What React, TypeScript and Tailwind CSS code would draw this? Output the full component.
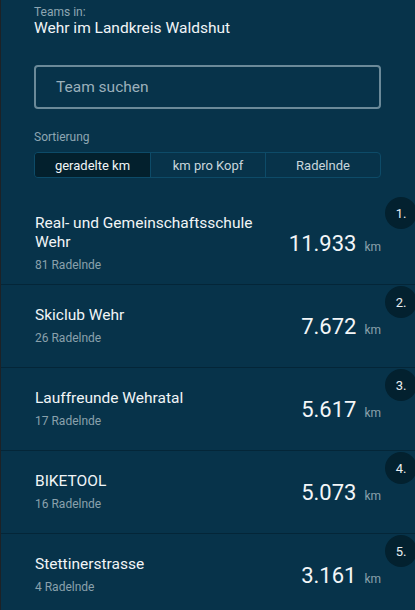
import React from "react";

type Team = { rank: number; name: string; members: string; km: string };

const teams: Team[] = [
  { rank: 1, name: "Real- und Gemeinschaftsschule Wehr", members: "81 Radelnde", km: "11.933" },
  { rank: 2, name: "Skiclub Wehr", members: "26 Radelnde", km: "7.672" },
  { rank: 3, name: "Lauffreunde Wehratal", members: "17 Radelnde", km: "5.617" },
  { rank: 4, name: "BIKETOOL", members: "16 Radelnde", km: "5.073" },
  { rank: 5, name: "Stettinerstrasse", members: "4 Radelnde", km: "3.161" },
];

function Row({ t, first }: { t: Team; first: boolean }) {
  return (
    <div
      className={
        "relative flex items-center justify-between border-b border-[#042638] pl-[34px] pr-[34px] " +
        (first ? "h-[89px] pt-[6px]" : "h-[83px]")
      }
    >
      <div className="absolute right-[-2px] top-[1px] flex h-[32px] w-[32px] items-center justify-center rounded-full bg-[#03212f] text-[13px] leading-[15px] text-[#e9eff2]">
        {t.rank}.
      </div>
      <div className="flex min-w-0 flex-1 flex-col pr-[8px]">
        <div className="text-[15.5px] leading-[19px] text-[#f1f5f7]">{t.name}</div>
        <div className="mt-[5px] text-[12px] leading-[16px] text-[#8aa1ac]">{t.members}</div>
      </div>
      <div className="flex shrink-0 items-baseline">
        <span className="text-[22px] text-[#f3f6f8]">{t.km}</span>
        <span className="ml-[8px] text-[12px] text-[#8aa1ac]">km</span>
      </div>
    </div>
  );
}

export default function App() {
  return (
    <div
      className="flex h-[610px] w-[415px] overflow-hidden bg-[#07334a]"
      style={{ fontFamily: "Roboto, 'Noto Sans', sans-serif" }}
    >
      <div className="w-[1px] shrink-0 bg-[#1d2226]" />
      <div className="flex min-w-0 flex-1 flex-col">
        <div className="flex flex-col pl-[33px] pr-[34px]">
          <div className="pt-[6px] text-[12px] leading-[13px] text-[#8ea6b2]">Teams in:</div>
          <div className="text-[15.5px] leading-[19px] text-[#f1f5f7]">Wehr im Landkreis Waldshut</div>
          <div className="mt-[27px] flex h-[44px] items-center rounded-[4px] border-2 border-[#6b8a99] pl-[20px]">
            <span className="text-[15.5px] leading-[19px] text-[#9bb0bb]">Team suchen</span>
          </div>
          <div className="mt-[21px] text-[12px] leading-[14px] text-[#8ea6b2]">Sortierung</div>
          <div className="mt-[8px] grid h-[26px] grid-cols-3 overflow-hidden rounded-[4px] border border-[#0d4b68]">
            <div className="flex items-center justify-center bg-[#03202d] text-[13px] leading-[15px] text-[#f1f5f7]">
              geradelte km
            </div>
            <div className="flex items-center justify-center border-l border-[#0d4b68] text-[13px] leading-[15px] text-[#c9d6dc]">
              km pro Kopf
            </div>
            <div className="flex items-center justify-center border-l border-[#0d4b68] text-[13px] leading-[15px] text-[#c9d6dc]">
              Radelnde
            </div>
          </div>
        </div>
        <div className="mt-[18px] flex flex-col">
          {teams.map((t, i) => (
            <Row key={t.rank} t={t} first={i === 0} />
          ))}
        </div>
      </div>
    </div>
  );
}
